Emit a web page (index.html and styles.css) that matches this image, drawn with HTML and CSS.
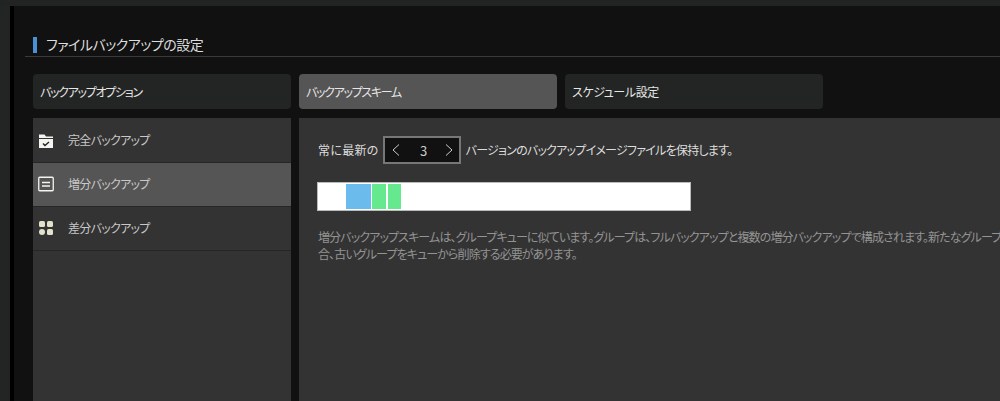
FILE: index.html
```html
<!DOCTYPE html>
<html lang="ja">
<head>
    <meta charset="UTF-8">
    <title>ファイルバックアップの設定</title>
    <link rel="stylesheet" href="styles.css">
</head>
<body>
    <div class="top-bar"></div>
    <div class="page">
        <div class="side-strip"></div>
        <div class="main">
            <div class="title-row">
                <h1 class="title">ファイルバックアップの設定</h1>
            </div>

            <div class="tabs">
                <div class="tab">バックアップオプション</div>
                <div class="tab active">バックアップスキーム</div>
                <div class="tab schedule">スケジュール設定</div>
            </div>

            <div class="columns">
                <div class="menu">
                    <div class="menu-item">
                        <svg class="icon" width="16" height="16" viewBox="0 0 16 16">
                            <path fill="#f4f4f0" d="M1 2.5h5.5L8 4.5h7V6H1z"/>
                            <path fill="#f4f4f0" d="M1 7h14v9H1z"/>
                            <path fill="none" stroke="#222" stroke-width="1.4" d="M5 11.5l2 2 4-3.5"/>
                        </svg>
                        <span>完全バックアップ</span>
                    </div>
                    <div class="menu-item selected">
                        <svg class="icon" width="16" height="16" viewBox="0 0 16 16">
                            <rect x="0.75" y="1.25" width="14.5" height="13.5" rx="1" fill="none" stroke="#f4f4f0" stroke-width="1.3"/>
                            <path stroke="#f4f4f0" stroke-width="1.3" d="M4 6.5h8M4 10h8"/>
                        </svg>
                        <span>増分バックアップ</span>
                    </div>
                    <div class="menu-item">
                        <svg class="icon" width="16" height="16" viewBox="0 0 16 16">
                            <rect x="1" y="1" width="6" height="6" rx="1.5" fill="#e3e0cc"/>
                            <rect x="9" y="1" width="6" height="6" rx="1.5" fill="#e3e0cc"/>
                            <circle cx="4" cy="12" r="3" fill="#e3e0cc"/>
                            <rect x="9" y="9" width="6" height="6" rx="1.5" fill="#e3e0cc"/>
                        </svg>
                        <span>差分バックアップ</span>
                    </div>
                </div>

                <div class="content">
                    <div class="keep-row">
                        <span class="keep-lead">常に最新の</span>
                        <div class="stepper">
                            <svg width="8" height="12" viewBox="0 0 8 12"><path fill="none" stroke="#ccc" d="M7 0.5L1 6l6 5.5"/></svg>
                            <span class="stepper-value">3</span>
                            <svg width="8" height="12" viewBox="0 0 8 12"><path fill="none" stroke="#ccc" d="M1 0.5L7 6l-6 5.5"/></svg>
                        </div>
                        <span class="keep-tail">バージョンのバックアップイメージファイルを保持します。</span>
                    </div>

                    <div class="scheme-bar">
                        <div class="block full"></div>
                        <div class="block incr"></div>
                        <div class="block incr"></div>
                    </div>

                    <p class="desc">増分バックアップスキームは、グループキューに似ています。グループは、フルバックアップと複数の増分バックアップで構成されます。新たなグループ<br>合、古いグループをキューから削除する必要があります。</p>
                </div>
            </div>
        </div>
    </div>
</body>
</html>
```

FILE: styles.css
```css
html, body {
    margin: 0;
    height: 100%;
    overflow: hidden;
}

body {
    display: flex;
    flex-direction: column;
    background: #111;
    color: #ddd;
    font-family: "Noto Sans CJK JP", "Noto Sans", sans-serif;
    font-size: 12px;
    font-feature-settings: "palt";
}

.top-bar {
    flex: none;
    height: 6px;
    background: #222423;
}

.page {
    flex: 1;
    min-height: 0;
    display: flex;
}

.side-strip {
    flex: none;
    width: 10px;
    background: #232524;
    border-right: 4px solid #000;
}

.main {
    flex: 1;
    min-width: 0;
    display: flex;
    flex-direction: column;
}

.title-row {
    flex: none;
    height: 50px;
    margin: 0 0 17px 11px;
    padding-left: 8px;
    border-bottom: 1px solid #3a3a3a;
    display: flex;
    align-items: flex-end;
}

.title {
    margin: 0 0 3px;
    padding-left: 9px;
    border-left: 4px solid #4a90d9;
    height: 16px;
    line-height: 14px;
    font-size: 14px;
    font-weight: normal;
    letter-spacing: -0.5px;
    color: #ddd;
}

.tabs {
    flex: none;
    display: flex;
    gap: 8px;
    margin: 0 0 9px 19px;
}

.tab {
    width: 251px;
    height: 35px;
    line-height: 35px;
    padding-left: 7px;
    background: #232524;
    border-radius: 4px;
    letter-spacing: -1.3px;
    color: #e6e6e6;
}

.tab.schedule {
    letter-spacing: -0.4px;
}

.tab.active {
    background: #555;
}

.columns {
    flex: 1;
    display: flex;
    gap: 8px;
    margin-left: 19px;
    min-height: 0;
}

.menu {
    flex: none;
    width: 258px;
    padding-top: 1px;
    background: #333;
}

.menu-item {
    display: flex;
    align-items: center;
    height: 41px;
    padding-bottom: 2px;
    border-bottom: 1px solid #262626;
    letter-spacing: -0.7px;
    color: #c8c8c8;
}

.menu-item.selected {
    background: #555;
}

.icon {
    flex: none;
    margin: 0 14px 0 5px;
}

.content {
    flex: 1;
    min-width: 0;
    overflow: hidden;
    background: #333;
    padding: 18px 0 0 18px;
}

.keep-row {
    display: flex;
    align-items: center;
    gap: 5px;
    height: 28px;
    white-space: nowrap;
    color: #ddd;
}

.keep-lead {
    margin: 0 -1px 2px 1px;
    letter-spacing: 0.3px;
}

.keep-tail {
    margin-bottom: 2px;
    letter-spacing: -0.75px;
}

.stepper {
    box-sizing: border-box;
    flex: none;
    width: 78px;
    height: 28px;
    display: flex;
    align-items: center;
    justify-content: space-between;
    padding: 0 6px 0 7px;
    background: #111;
    border: 2px solid #777;
    color: #ccc;
}

.stepper-value {
    margin-left: 3px;
    font-size: 13px;
}

.scheme-bar {
    box-sizing: border-box;
    width: 374px;
    height: 29px;
    margin-top: 18px;
    padding: 1px 0 1px 28px;
    display: flex;
    gap: 1px;
    background: #fff;
    border: 1px solid #bbb;
}

.block {
    height: 100%;
}

.block.full {
    width: 25px;
    background: #6bbcec;
}

.block.incr {
    width: 14px;
    background: #66e88f;
}

.block.incr + .block.incr {
    margin-left: 1px;
    width: 13px;
}

.desc {
    margin: 17px 0 0 1px;
    white-space: nowrap;
    line-height: 17px;
    font-size: 12px;
    letter-spacing: -0.88px;
    color: #939393;
}
```
